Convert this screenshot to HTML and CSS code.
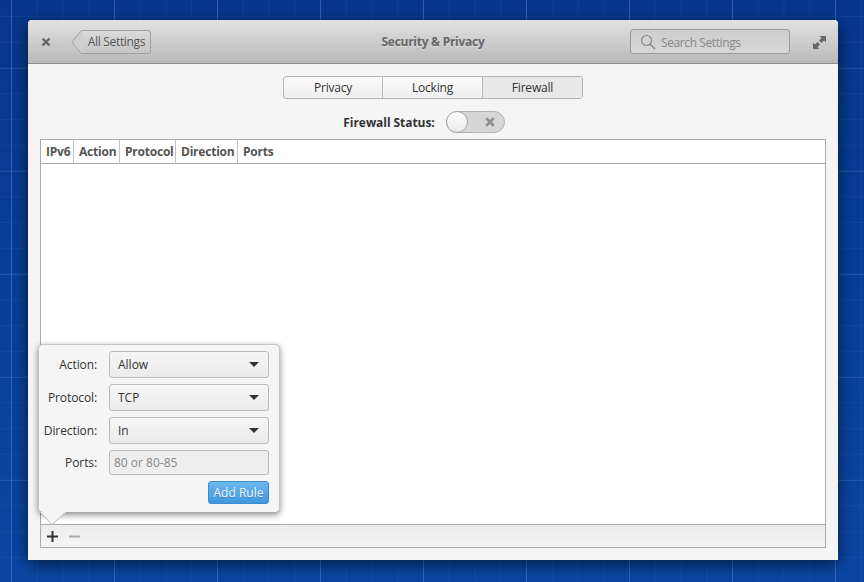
FILE: index.html
```html
<!DOCTYPE html>
<html lang="en">
<head>
<meta charset="utf-8">
<title>Security &amp; Privacy</title>
<link rel="stylesheet" href="styles.css">
</head>
<body>
<div class="window">
  <header class="headerbar">
    <svg class="close-icon" width="10" height="10" viewBox="0 0 10 10"><path d="M1.500 1.500l7 7M8.500 1.500l-7 7" stroke="#666" stroke-width="2.400" fill="none"/></svg>
    <button class="back">
      <svg class="back-tip" width="12" height="24" viewBox="0 0 12 24"><path d="M12 .5H10.500L.8 12l9.700 11.500H12" fill="#cfcfcf" stroke="#a0a0a0"/></svg>
      <span class="back-label">All Settings</span>
    </button>
    <h1 class="title">Security &amp; Privacy</h1>
    <div class="search">
      <svg width="16" height="16" viewBox="0 0 16 16"><circle cx="6.500" cy="6.500" r="5" fill="none" stroke="#8a8a8a" stroke-width="1.200"/><path d="M10 10l5 5" stroke="#8a8a8a" stroke-width="1.600"/></svg>
      <span class="search-text">Search Settings</span>
    </div>
    <svg class="max-icon" width="13" height="13" viewBox="0 0 13 13"><path d="M6.500 0H13v6.500L11 4.500 8.500 7 6 4.500 8.500 2zM0 13V6.500L2 8.500 4.500 6 7 8.500 4.500 11l2 2z" fill="#666"/></svg>
  </header>
  <main class="content">
    <div class="tabs">
      <div class="tab t1">Privacy</div>
      <div class="tab">Locking</div>
      <div class="tab active">Firewall</div>
    </div>
    <div class="status">
      <span class="status-label">Firewall Status:</span>
      <div class="switch">
        <div class="knob"></div>
        <svg width="10" height="10" viewBox="0 0 10 10"><path d="M1.200 1.200l7.600 7.600M8.800 1.200l-7.600 7.600" stroke="#8c8c8c" stroke-width="2.600" fill="none"/></svg>
      </div>
    </div>
    <section class="frame">
      <div class="thead">
        <div class="th c1">IPv6</div>
        <div class="th c2">Action</div>
        <div class="th c3">Protocol</div>
        <div class="th c4">Direction</div>
        <div class="th c5">Ports</div>
      </div>
      <div class="tbody"></div>
      <div class="toolbar">
        <svg width="11" height="11" viewBox="0 0 11 11"><path d="M5.500 0v11M0 5.500h11" stroke="#333" stroke-width="2" fill="none"/></svg>
        <svg width="11" height="11" viewBox="0 0 11 11"><path d="M0 5.500h11" stroke="#aaa" stroke-width="2" fill="none"/></svg>
      </div>
    </section>
  </main>
  <div class="popover">
    <div class="form-row">
      <span class="form-label">Action:</span>
      <div class="combo"><span>Allow</span><i class="arrow"></i></div>
    </div>
    <div class="form-row">
      <span class="form-label">Protocol:</span>
      <div class="combo"><span>TCP</span><i class="arrow"></i></div>
    </div>
    <div class="form-row">
      <span class="form-label">Direction:</span>
      <div class="combo"><span>In</span><i class="arrow"></i></div>
    </div>
    <div class="form-row">
      <span class="form-label">Ports:</span>
      <div class="entry">80 or 80-85</div>
    </div>
    <div class="actions"><button class="add">Add Rule</button></div>
    <svg class="tail" width="28" height="14" viewBox="0 0 28 14"><path d="M0 0L12 12.500 26 0" fill="#f5f5f5" stroke="#bbb"/></svg>
  </div>
</div>
</body>
</html>
```
FILE: styles.css
```css
* { box-sizing: border-box; }
html, body { height: 100%; }
body {
  margin: 0;
  overflow: hidden;
  padding: 20px 0 0 28px;
  font-family: "Open Sans", "Noto Sans", sans-serif;
  font-size: 12px;
  color: #333;
  background-color: #0b3f95;
  background-image:
    linear-gradient(90deg, rgba(130,170,230,.3) 1px, transparent 1px),
    linear-gradient(0deg, rgba(130,170,230,.16) 1px, transparent 1px),
    linear-gradient(90deg, rgba(130,170,230,.07) 1px, transparent 1px),
    linear-gradient(0deg, rgba(130,170,230,.07) 1px, transparent 1px),
    linear-gradient(180deg, #07378c 0%, #0a46a3 100%);
  background-size: 103px 103px, 103px 103px, 25.75px 25.75px, 25.75px 25.75px, 100% 100%;
  background-position: 11px 0, 0 69px, 11px 0, 0 17px, 0 0;
}
.window {
  position: relative;
  width: 810px;
  height: 540px;
  display: flex;
  flex-direction: column;
  background: #f5f5f5;
  border-radius: 4px 4px 0 0;
  box-shadow: 0 4px 16px rgba(0,0,0,.6);
}
.headerbar {
  height: 44px;
  flex: none;
  display: flex;
  align-items: center;
  position: relative;
  background: linear-gradient(#e2e2e2, #b9b9b9);
  border-bottom: 1px solid #8e8e8e;
  border-radius: 4px 4px 0 0;
  padding: 0 12px 0 13px;
}
.back {
  display: flex;
  height: 24px;
  margin: 0 0 0 20px;
  padding: 0;
  border: 0;
  background: none;
  font: inherit;
  color: #555;
}
.back-tip { display: block; }
.back-label {
  display: block;
  width: 68px;
  height: 24px;
  line-height: 22px;
  padding-left: 0;
  letter-spacing: -.33px;
  background: linear-gradient(#dadada, #c6c6c6);
  border: 1px solid #a0a0a0;
  border-left: 0;
  border-radius: 0 3px 3px 0;
  white-space: nowrap;
}
.title {
  position: absolute;
  left: 0;
  right: 0;
  margin: 0;
  text-align: center;
  font-size: 12px;
  font-weight: 700;
  letter-spacing: -.27px;
  color: #666;
  text-shadow: 0 1px 0 rgba(255,255,255,.4);
}
.search {
  margin-left: auto;
  width: 160px;
  height: 25px;
  display: flex;
  align-items: center;
  gap: 5px;
  padding-left: 9px;
  color: #888;
  background: linear-gradient(#cecece, #d6d6d6);
  border: 1px solid #9c9c9c;
  border-radius: 3px;
}
.search-text { letter-spacing: -.4px; padding-top: 2px; }
.max-icon { margin-left: 23px; margin-top: 1px; }
.content {
  flex: 1;
  display: flex;
  flex-direction: column;
  padding: 12px;
  min-height: 0;
}
.tabs {
  align-self: center;
  display: flex;
  width: 300px;
  height: 23px;
  border: 1px solid #b4b4b4;
  border-radius: 3px;
  background: linear-gradient(#fafafa, #efefef);
}
.tab {
  width: 100px;
  text-align: center;
  line-height: 21px;
  letter-spacing: -.2px;
  border-left: 1px solid #b9b9b9;
}
.tab.t1 { width: 98px; border-left: 0; }
.tab.active { background: #e8e8e8; }
.status {
  display: flex;
  justify-content: center;
  align-items: center;
  gap: 11px;
  height: 22px;
  margin-top: 12px;
  padding-right: 18px;
}
.status-label { font-weight: 700; letter-spacing: -.06px; }
.switch {
  position: relative;
  width: 59px;
  height: 22px;
  border: 1px solid #b2b2b2;
  border-radius: 11px;
  background: #d6d6d6;
  display: flex;
  align-items: center;
  justify-content: flex-end;
  padding-right: 9px;
}
.knob {
  position: absolute;
  left: -1px;
  top: -1px;
  width: 22px;
  height: 22px;
  border: 1px solid #a8a8a8;
  border-radius: 50%;
  background: linear-gradient(#fdfdfd, #eaeaea);
}
.frame {
  margin-top: 6px;
  flex: 1;
  display: flex;
  flex-direction: column;
  border: 1px solid #aaa;
  background: #fff;
  min-height: 0;
}
.thead {
  display: flex;
  height: 24px;
  flex: none;
  border-bottom: 1px solid #aaa;
}
.th {
  font-weight: 700;
  line-height: 23px;
  letter-spacing: -.22px;
  color: #555;
  padding-left: 5px;
  border-right: 1px solid #c4c4c4;
}
.c1 { width: 33px; }
.c2 { width: 46px; }
.c3 { width: 56px; }
.c4 { width: 62px; }
.c5 { border-right: 0; }
.tbody { flex: 1; }
.toolbar {
  height: 23px;
  flex: none;
  display: flex;
  align-items: center;
  gap: 11px;
  padding-left: 6px;
  border-top: 1px solid #aaa;
  background: linear-gradient(#ececec, #f5f5f5);
}
.popover {
  position: absolute;
  left: 10px;
  top: 324px;
  width: 242px;
  height: 169px;
  padding: 6px 10px 0 0;
  background: #f5f5f5;
  border: 1px solid #c4c4c4;
  border-bottom-color: #aaa;
  border-radius: 5px;
  box-shadow: 0 2px 6px rgba(0,0,0,.45);
}
.form-row {
  display: flex;
  align-items: center;
  margin-bottom: 6px;
}
.form-label {
  width: 58px;
  margin-right: 12px;
  letter-spacing: -.1px;
  text-align: right;
}
.combo {
  width: 160px;
  height: 27px;
  display: flex;
  align-items: center;
  justify-content: space-between;
  padding: 0 9px 0 8px;
  border: 1px solid #bbb;
  border-radius: 3px;
  background: linear-gradient(#f6f6f6, #ebebeb);
}
.arrow {
  width: 0;
  height: 0;
  border-left: 5.500px solid transparent;
  border-right: 5.500px solid transparent;
  border-top: 5.500px solid #333;
}
.entry {
  width: 160px;
  height: 25px;
  line-height: 23px;
  padding-left: 4px;
  color: #888;
  border: 1px solid #bbb;
  border-radius: 3px;
  background: #eee;
}
.actions {
  display: flex;
  justify-content: flex-end;
}
.add {
  width: 61px;
  height: 23px;
  padding: 0;
  font: inherit;
  color: #f0f6fc;
  text-shadow: 0 1px 0 rgba(0,0,0,.2);
  border: 1px solid #3a8bd0;
  border-radius: 3px;
  background: linear-gradient(#6cb8ee, #3f97dc);
}
.tail {
  position: absolute;
  left: 1px;
  top: 167px;
  display: block;
}
```
